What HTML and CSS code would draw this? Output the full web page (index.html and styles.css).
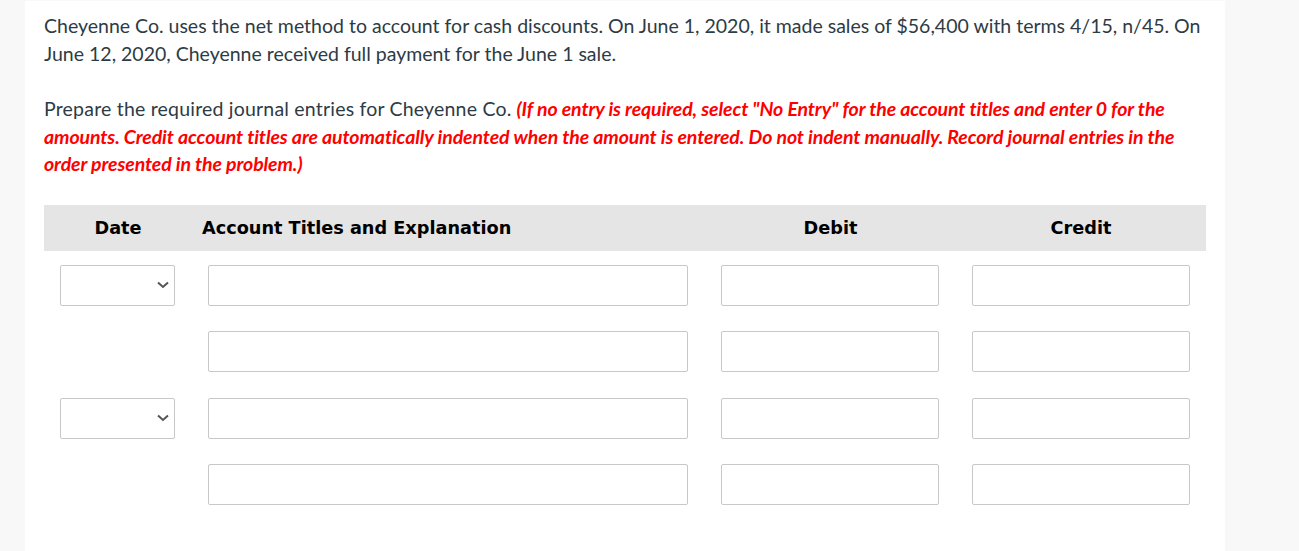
FILE: index.html
```html
<!DOCTYPE html>
<html>
<head>
<meta charset="utf-8">
<link rel="stylesheet" href="styles.css">
</head>
<body>
<div class="panel">
  <p class="text">Cheyenne Co. uses the net method to account for cash discounts. On June 1, 2020, it made sales of $56,400 with terms 4/15, n/45. On June 12, 2020, Cheyenne received full payment for the June 1 sale.</p>
  <p class="text para2"><span class="lead">Prepare the required journal entries for Cheyenne Co.</span> <em class="note">(If no entry is required, select "No Entry" for the account titles and enter 0 for the amounts. Credit account titles are automatically indented when the amount is entered. Do not indent manually. Record journal entries in the order presented in the problem.)</em></p>

  <div class="journal">
    <div class="head">
      <div class="hc hc-date">Date</div>
      <div class="hc hc-acct">Account Titles and Explanation</div>
      <div class="hc hc-num">Debit</div>
      <div class="hc hc-num">Credit</div>
    </div>

    <div class="row">
      <div class="cell"><div class="select"><svg class="chev" width="12" height="8" viewBox="0 0 12 8"><path d="M1 1.5 L6 6 L11 1.5" fill="none" stroke="#555" stroke-width="2"/></svg></div></div>
      <div class="cell"><div class="input"></div></div>
      <div class="cell"><div class="input"></div></div>
      <div class="cell"><div class="input"></div></div>
    </div>
    <div class="row">
      <div class="cell"></div>
      <div class="cell"><div class="input"></div></div>
      <div class="cell"><div class="input"></div></div>
      <div class="cell"><div class="input"></div></div>
    </div>
    <div class="row">
      <div class="cell"><div class="select"><svg class="chev" width="12" height="8" viewBox="0 0 12 8"><path d="M1 1.5 L6 6 L11 1.5" fill="none" stroke="#555" stroke-width="2"/></svg></div></div>
      <div class="cell"><div class="input"></div></div>
      <div class="cell"><div class="input"></div></div>
      <div class="cell"><div class="input"></div></div>
    </div>
    <div class="row">
      <div class="cell"></div>
      <div class="cell"><div class="input"></div></div>
      <div class="cell"><div class="input"></div></div>
      <div class="cell"><div class="input"></div></div>
    </div>
  </div>
</div>
</body>
</html>
```
FILE: styles.css
```css
html, body {
  margin: 0;
  padding: 0;
  background: #f8f8f8;
}
body {
  height: 551px;
  overflow: hidden;
}
.panel {
  margin: 1px 0 0 25px;
  width: 1200px;
  height: 560px;
  background: #ffffff;
  box-sizing: border-box;
  padding: 11px 0 0 19px;
  font-family: Lato, "Open Sans", sans-serif;
}
.text {
  margin: 0;
  width: 1170px;
  font-size: 19.5px;
  line-height: 28px;
  color: #2d3b45;
}
.para2 {
  margin-top: 27px;
  line-height: 27.5px;
}
.lead {
  letter-spacing: 0.2px;
}
.note {
  color: #ff0000;
  font-weight: 700;
  font-style: italic;
  letter-spacing: -0.1px;
}
.journal {
  margin-top: 27px;
  width: 1162px;
}
.head, .row {
  display: grid;
  grid-template-columns: 148px 513px 251px 250px;
}
.head {
  height: 46px;
  background: #e5e5e5;
  align-items: center;
}
.hc {
  font-family: "DejaVu Sans", Verdana, sans-serif;
  font-weight: 700;
  font-size: 17.7px;
  color: #000;
}
.hc-date { text-align: center; }
.hc-acct { padding-left: 10px; }
.hc-num { text-align: center; }
.row {
  margin-top: 14px;
  height: 41px;
}
.row + .row { margin-top: 25.5px; }
.cell {
  padding: 0 17px 0 16px;
}
.cell:last-child {
  padding-right: 16px;
}
.input, .select {
  height: 41px;
  box-sizing: border-box;
  border: 1px solid #c8c8c8;
  border-radius: 2px;
  background: #fff;
}
.select {
  display: flex;
  align-items: center;
  justify-content: flex-end;
  padding-right: 5px;
}
.chev { display: block; }
```
